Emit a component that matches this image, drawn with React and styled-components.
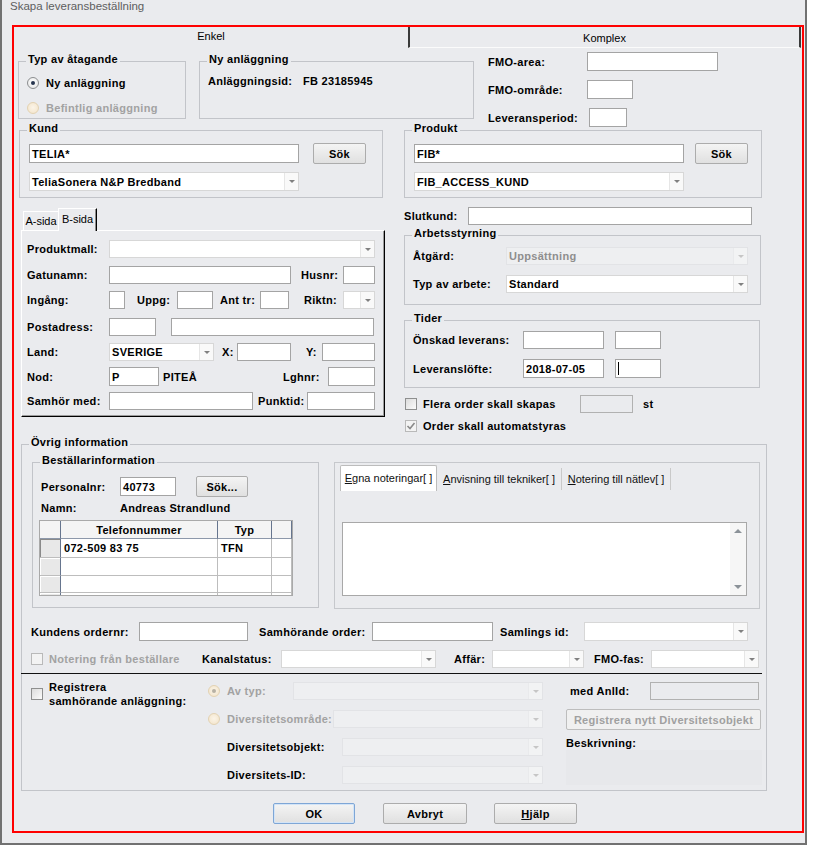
import React from "react";
import styled, { createGlobalStyle } from "styled-components";

const BG = "#eaebee";
const FONT = `"Liberation Sans", Arial, sans-serif`;

const GlobalStyle = createGlobalStyle`
  html, body { margin: 0; padding: 0; background: #ffffff; }
  body { font-family: ${FONT}; color: #000; }
`;

// Window chrome
const Window = styled.div`
  box-sizing: border-box;
  width: 807px;
  height: 845px;
  background: ${BG};
  border: 2px solid #717171;
  border-top: none;
  overflow: hidden;
`;

const TitleBar = styled.div`
  height: 25px;
  padding-left: 8px;
  font: 11.5px ${FONT};
  line-height: 14px;
  color: #5e5e5e;
  overflow: hidden;
`;

const TitleText = styled.div`
  margin-top: -1px;
`;

const RedFrame = styled.div`
  box-sizing: border-box;
  margin-left: 10px;
  width: 792px;
  height: 808px;
  border: 2px solid #ff0000;
  display: flex;
  flex-direction: column;
`;

const TopTabs = styled.div`
  display: flex;
  height: 21px;
  flex: none;
`;

const TopTab = styled.div`
  box-sizing: border-box;
  width: ${(p) => p.$w}px;
  display: flex;
  align-items: center;
  justify-content: center;
  font: 11px ${FONT};
  padding-bottom: ${(p) => (p.$active ? 3 : 0)}px;
  padding-top: ${(p) => (p.$active ? 0 : 1)}px;
  border-left: ${(p) => (p.$active ? "none" : "2px solid #3a3a3a")};
  border-right: ${(p) => (p.$active ? "none" : "2px solid #3a3a3a")};
  border-bottom: ${(p) => (p.$active ? "none" : "1px solid #fbfbfb")};
`;

const Page = styled.div`
  display: flex;
  flex-direction: column;
  padding-left: 4px;
`;

// Layout helpers
const Section = styled.div`
  display: flex;
  align-items: flex-start;
  flex: none;
  margin-top: ${(p) => p.$mt || 0}px;
  margin-left: ${(p) => p.$ml || 0}px;
`;

const Column = styled.div`
  display: flex;
  flex-direction: column;
  flex: none;
  width: ${(p) => (p.$w ? `${p.$w}px` : "auto")};
  margin-top: ${(p) => p.$mt || 0}px;
  margin-left: ${(p) => p.$ml || 0}px;
`;

const Row = styled.div`
  display: flex;
  align-items: center;
  flex: none;
  height: ${(p) => p.$h || 18}px;
  margin-top: ${(p) => p.$mt || 0}px;
  margin-left: ${(p) => p.$ml || 0}px;
`;

const Text = styled.span`
  flex: none;
  box-sizing: border-box;
  width: ${(p) => (p.$w ? `${p.$w}px` : "auto")};
  margin-left: ${(p) => p.$ml || 0}px;
  font: bold 11px ${FONT};
  letter-spacing: 0.3px;
  line-height: 14px;
  color: ${(p) => (p.$off ? "#a2a2a2" : "#000")};
  white-space: nowrap;
`;

const Group = styled.div`
  position: relative;
  flex: none;
  box-sizing: border-box;
  width: ${(p) => p.$w}px;
  height: ${(p) => p.$h}px;
  margin-top: ${(p) => p.$mt || 0}px;
  margin-left: ${(p) => p.$ml || 0}px;
  border: 1px solid #c2c4c9;
  display: flex;
  flex-direction: column;
`;

const Legend = styled.span`
  position: absolute;
  top: -9px;
  left: 7px;
  padding: 0 2px;
  background: ${BG};
  font: bold 11px ${FONT};
  letter-spacing: 0.3px;
  line-height: 13px;
  white-space: nowrap;
`;

// Controls
const Field = styled.div`
  flex: none;
  box-sizing: border-box;
  display: flex;
  align-items: center;
  width: ${(p) => p.$w}px;
  height: ${(p) => p.$h || 18}px;
  margin-left: ${(p) => p.$ml || 0}px;
  padding-left: 2px;
  border: 1px solid ${(p) => (p.$off ? "#b1b1b1" : "#a4a4a4")};
  background: ${(p) => (p.$off ? BG : "#fff")};
  font: bold 11px ${FONT};
  letter-spacing: 0.3px;
  white-space: nowrap;
  overflow: hidden;
`;

const Caret = styled.span`
  width: 1px;
  height: 13px;
  background: #000;
`;

const ComboBox = styled.div`
  flex: none;
  box-sizing: border-box;
  display: flex;
  width: ${(p) => p.$w}px;
  height: ${(p) => p.$h || 18}px;
  margin-left: ${(p) => p.$ml || 0}px;
  border: 1px solid ${(p) => (p.$off ? "#e2e3e6" : "#d7d7d7")};
  background: ${(p) => (p.$off ? "#eeeff1" : "#fff")};
`;

const ComboValue = styled.span`
  flex: 1;
  display: flex;
  align-items: center;
  padding-left: 2px;
  font: bold 11px ${FONT};
  letter-spacing: 0.3px;
  color: ${(p) => (p.$off ? "#8e8e8e" : "#000")};
  white-space: nowrap;
  overflow: hidden;
`;

const ComboArrow = styled.span`
  width: 13px;
  flex: none;
  display: flex;
  align-items: center;
  justify-content: center;
  border-left: 1px solid ${(p) => (p.$off ? "#e9eaec" : "#e6e6e6")};
  background: ${(p) => (p.$off ? "#f2f3f4" : "#f9f9f9")};
  &::after {
    content: "";
    border-left: 3px solid transparent;
    border-right: 3px solid transparent;
    border-top: 3px solid ${(p) => (p.$off ? "#c6c6c6" : "#808080")};
  }
`;

function Combo({ w, h, ml, value, off }) {
  return (
    <ComboBox $w={w} $h={h} $ml={ml} $off={off}>
      <ComboValue $off={off}>{value}</ComboValue>
      <ComboArrow $off={off} />
    </ComboBox>
  );
}

const Btn = styled.div`
  flex: none;
  box-sizing: border-box;
  display: flex;
  align-items: center;
  justify-content: center;
  width: ${(p) => p.$w}px;
  height: ${(p) => p.$h || 21}px;
  margin-left: ${(p) => p.$ml || 0}px;
  margin-top: ${(p) => p.$mt || 0}px;
  border: 1px solid ${(p) => (p.$primary ? "#7ea6d6" : p.$off ? "#bdbdbd" : "#acacac")};
  box-shadow: ${(p) => (p.$primary ? "inset 0 0 0 1px #d3e4f7" : "none")};
  border-radius: 2px;
  background: ${(p) => (p.$off ? "#f0f0f0" : "linear-gradient(#f4f4f4, #e0e0e0)")};
  font: bold 11px ${FONT};
  letter-spacing: 0.3px;
  color: ${(p) => (p.$off ? "#a0a0a0" : "#000")};
  white-space: nowrap;
`;

const U = styled.span`
  text-decoration: underline;
`;

const Radio = styled.span`
  position: relative;
  flex: none;
  box-sizing: border-box;
  width: 12px;
  height: 12px;
  border-radius: 50%;
  border: 1px solid ${(p) => (p.$off ? "#e3d2b2" : "#8c8e90")};
  background: ${(p) =>
    p.$off
      ? "radial-gradient(circle at 50% 45%, #fbf4e8, #f2e3c8)"
      : "radial-gradient(circle at 50% 40%, #ffffff, #e2e2e2)"};
  &::after {
    content: "";
    display: ${(p) => (p.$checked ? "block" : "none")};
    position: absolute;
    left: 3px;
    top: 3px;
    width: 4px;
    height: 4px;
    border-radius: 50%;
    background: ${(p) => (p.$off ? "#b8b1a4" : "#26344e")};
  }
`;

const Check = styled.span`
  flex: none;
  box-sizing: border-box;
  width: 12px;
  height: 12px;
  margin-left: ${(p) => p.$ml || 0}px;
  border: 1px solid ${(p) => (p.$off ? "#b9b9b9" : "#8e8f8f")};
  background: ${(p) => (p.$off ? "#f3f3f3" : "linear-gradient(135deg, #dcdcdc, #fbfbfb)")};
  display: flex;
  align-items: center;
  justify-content: center;
`;

function Checkbox({ ml, off, checked }) {
  return (
    <Check $ml={ml} $off={off}>
      {checked && (
        <svg width="10" height="10" viewBox="0 0 10 10">
          <polyline points="1.5,5 4,7.5 8.5,2" fill="none" stroke="#8a8a8a" strokeWidth="1.6" />
        </svg>
      )}
    </Check>
  );
}

// Small A/B tabs
const SubTabs = styled.div`
  position: relative;
  z-index: 1;
  display: flex;
  align-items: flex-end;
  height: 22px;
  margin-top: 10px;
  padding-left: 2px;
`;

const SubTab = styled.div`
  box-sizing: border-box;
  width: ${(p) => p.$w}px;
  height: ${(p) => (p.$active ? 23 : 19)}px;
  margin-bottom: ${(p) => (p.$active ? -1 : 0)}px;
  padding-bottom: ${(p) => (p.$active ? 3 : 0)}px;
  background: ${BG};
  border-top: 1px solid #fff;
  border-left: 1px solid #fff;
  border-right: ${(p) => (p.$active ? "1px solid #000" : "none")};
  box-shadow: ${(p) => (p.$active ? "inset -1px 0 0 #8a8a8a" : "none")};
  display: flex;
  align-items: center;
  justify-content: center;
  font: 11px ${FONT};
`;

const SubPage = styled.div`
  box-sizing: border-box;
  width: 364px;
  height: 187px;
  border-top: 1px solid #fff;
  border-left: 1px solid #fff;
  border-right: 1px solid #000;
  border-bottom: 1px solid #000;
  box-shadow: inset -1px -1px 0 #9c9c9c;
  display: flex;
  flex-direction: column;
  padding-left: 5px;
`;

// Phone grid
const Table = styled.div`
  box-sizing: border-box;
  width: 254px;
  height: 76px;
  margin-left: 6px;
  margin-top: 5px;
  border: 1px solid #a9a9a9;
  background: #fff;
  display: grid;
  grid-template-columns: 21px 157px 54px 20px;
  grid-template-rows: 18px 19px 18px 17px 18px;
  overflow: hidden;
`;

const Cell = styled.div`
  box-sizing: border-box;
  display: flex;
  align-items: center;
  justify-content: ${(p) => (p.$head ? "center" : "flex-start")};
  padding-left: ${(p) => (p.$head ? 0 : 3)}px;
  border-right: 1px solid ${(p) => (p.$head || p.$lead ? "#66758e" : "#bdbdbd")};
  border-bottom: 1px solid ${(p) => (p.$head ? "#8d98aa" : "#bdbdbd")};
  background: ${(p) => (p.$head ? "#f4f4f4" : p.$lead ? "#e8e8e8" : "#fff")};
  box-shadow: ${(p) => (p.$pressed ? "inset 1px 1px 0 #8a8a8a" : p.$lead ? "inset 1px 1px 0 #fff" : "none")};
  font: bold 11px ${FONT};
  letter-spacing: 0.3px;
  white-space: nowrap;
`;

// Notes tabs
const NotesPanel = styled.div`
  flex: none;
  box-sizing: border-box;
  width: 426px;
  height: 147px;
  margin-left: 15px;
  border: 1px solid #c6c8cc;
  display: flex;
  flex-direction: column;
`;

const NoteTabs = styled.div`
  display: flex;
  align-items: flex-start;
  height: 26px;
  margin-top: 2px;
  margin-left: 5px;
`;

const NoteTab = styled.div`
  box-sizing: border-box;
  width: ${(p) => p.$w}px;
  height: ${(p) => (p.$active ? 26 : 22)}px;
  margin-top: ${(p) => (p.$active ? 0 : 3)}px;
  background: ${(p) => (p.$active ? "#fff" : "transparent")};
  border: ${(p) => (p.$active ? "1px solid #bcbcbc" : "none")};
  border-bottom: none;
  border-right: 1px solid ${(p) => (p.$active ? "#bcbcbc" : "#c9c9c9")};
  border-radius: ${(p) => (p.$active ? "2px 2px 0 0" : "0")};
  display: flex;
  align-items: center;
  justify-content: center;
  padding-bottom: ${(p) => (p.$active ? 2 : 0)}px;
  font: 11px ${FONT};
  color: #111;
  white-space: nowrap;
`;

const NoteArea = styled.div`
  box-sizing: border-box;
  width: 405px;
  height: 74px;
  margin-top: 31px;
  margin-left: 7px;
  border: 1px solid #a8a8a8;
  background: #fff;
  display: flex;
  justify-content: flex-end;
`;

const ScrollBar = styled.div`
  width: 16px;
  background: #f6f6f6;
  display: flex;
  flex-direction: column;
  justify-content: space-between;
  align-items: center;
  padding: 6px 0;
`;

const ScrollArrow = styled.span`
  border-left: 4px solid transparent;
  border-right: 4px solid transparent;
  border-bottom: ${(p) => (p.$up ? "4px solid #8b9298" : "none")};
  border-top: ${(p) => (p.$up ? "none" : "4px solid #8b9298")};
`;

const Separator = styled.div`
  flex: none;
  width: 741px;
  height: 1px;
  margin-top: 5px;
  margin-left: -1px;
  background: #111;
`;

const DescBox = styled.div`
  width: 196px;
  height: 35px;
  background: #e7e8eb;
`;

const TwoLine = styled(Text)`
  white-space: normal;
  line-height: 14px;
`;

export default function App() {
  return (
    <>
      <GlobalStyle />
      <Window>
        <TitleBar>
          <TitleText>Skapa leveransbeställning</TitleText>
        </TitleBar>
        <RedFrame>
          <TopTabs>
            <TopTab $w={394} $active>Enkel</TopTab>
            <TopTab $w={393}>Komplex</TopTab>
          </TopTabs>
          <Page>
            {/* Top row */}
            <Section $mt={4}>
              <Group $w={168} $h={58} $mt={9}>
                <Legend>Typ av åtagande</Legend>
                <Row $h={14} $mt={14} $ml={8}>
                  <Radio $checked />
                  <Text $ml={7}>Ny anläggning</Text>
                </Row>
                <Row $h={14} $mt={11} $ml={8}>
                  <Radio $off />
                  <Text $ml={7} $off>Befintlig anläggning</Text>
                </Row>
              </Group>
              <Group $w={275} $h={58} $mt={9} $ml={13}>
                <Legend>Ny anläggning</Legend>
                <Row $h={14} $mt={12} $ml={8}>
                  <Text $w={95}>Anläggningsid:</Text>
                  <Text>FB 23185945</Text>
                </Row>
              </Group>
              <Column $ml={14}>
                <Row $h={19}>
                  <Text $w={99}>FMO-area:</Text>
                  <Field $w={131} $h={19} />
                </Row>
                <Row $h={19} $mt={9}>
                  <Text $w={99}>FMO-område:</Text>
                  <Field $w={46} $h={19} />
                </Row>
                <Row $h={19} $mt={9}>
                  <Text $w={101}>Leveransperiod:</Text>
                  <Field $w={38} $h={19} />
                </Row>
              </Column>
            </Section>

            {/* Kund / Produkt */}
            <Section $mt={3}>
              <Group $w={364} $h={68} $ml={1}>
                <Legend>Kund</Legend>
                <Row $h={21} $mt={12} $ml={9}>
                  <Field $w={270} $h={19}>TELIA*</Field>
                  <Btn $w={53} $ml={14}>Sök</Btn>
                </Row>
                <Row $h={19} $mt={8} $ml={9}>
                  <Combo w={270} h={19} value="TeliaSonera N&P Bredband" />
                </Row>
              </Group>
              <Group $w={358} $h={68} $ml={21}>
                <Legend>Produkt</Legend>
                <Row $h={21} $mt={12} $ml={9}>
                  <Field $w={270} $h={19}>FIB*</Field>
                  <Btn $w={53} $ml={11}>Sök</Btn>
                </Row>
                <Row $h={19} $mt={8} $ml={9}>
                  <Combo w={270} h={19} value="FIB_ACCESS_KUND" />
                </Row>
              </Group>
            </Section>

            {/* Address tabs + right column */}
            <Section>
              <Column $w={364} $ml={3}>
                <SubTabs>
                  <SubTab $w={35}>A-sida</SubTab>
                  <SubTab $w={39} $active>B-sida</SubTab>
                </SubTabs>
                <SubPage>
                  <Row $mt={9}>
                    <Text $w={82}>Produktmall:</Text>
                    <Combo w={266} />
                  </Row>
                  <Row $mt={8}>
                    <Text $w={82}>Gatunamn:</Text>
                    <Field $w={182} />
                    <Text $w={42} $ml={10}>Husnr:</Text>
                    <Field $w={32} />
                  </Row>
                  <Row $mt={7}>
                    <Text $w={82}>Ingång:</Text>
                    <Field $w={16} />
                    <Text $w={40} $ml={12}>Uppg:</Text>
                    <Field $w={36} />
                    <Text $w={40} $ml={7}>Ant tr:</Text>
                    <Field $w={29} />
                    <Text $w={39} $ml={15}>Riktn:</Text>
                    <Combo w={32} />
                  </Row>
                  <Row $mt={9}>
                    <Text $w={82}>Postadress:</Text>
                    <Field $w={47} />
                    <Field $w={203} $ml={15} />
                  </Row>
                  <Row $mt={7}>
                    <Text $w={82}>Land:</Text>
                    <Combo w={105} value="SVERIGE" />
                    <Text $w={15} $ml={8}>X:</Text>
                    <Field $w={54} />
                    <Text $w={16} $ml={15}>Y:</Text>
                    <Field $w={53} />
                  </Row>
                  <Row $mt={6} $h={19}>
                    <Text $w={82}>Nod:</Text>
                    <Field $w={50} $h={19}>P</Field>
                    <Text $w={120} $ml={4}>PITEÅ</Text>
                    <Text $w={45}>Lghnr:</Text>
                    <Field $w={47} $h={19} />
                  </Row>
                  <Row $mt={6}>
                    <Text $w={82}>Samhör med:</Text>
                    <Field $w={144} />
                    <Text $w={49} $ml={5}>Punktid:</Text>
                    <Field $w={68} />
                  </Row>
                </SubPage>
              </Column>

              <Column $w={358} $ml={19}>
                <Row $mt={9}>
                  <Text $w={64}>Slutkund:</Text>
                  <Field $w={284} />
                </Row>
                <Group $w={357} $h={70} $mt={10}>
                  <Legend>Arbetsstyrning</Legend>
                  <Row $mt={11} $ml={8}>
                    <Text $w={93}>Åtgärd:</Text>
                    <Combo w={242} value="Uppsättning" off />
                  </Row>
                  <Row $mt={10} $ml={8}>
                    <Text $w={93}>Typ av arbete:</Text>
                    <Combo w={242} value="Standard" />
                  </Row>
                </Group>
                <Group $w={356} $h={68} $mt={15}>
                  <Legend>Tider</Legend>
                  <Row $mt={10} $ml={8}>
                    <Text $w={110}>Önskad leverans:</Text>
                    <Field $w={81} />
                    <Field $w={46} $ml={11} />
                  </Row>
                  <Row $mt={10} $ml={8} $h={19}>
                    <Text $w={110}>Leveranslöfte:</Text>
                    <Field $w={81} $h={19}>2018-07-05</Field>
                    <Field $w={46} $h={19} $ml={11}>
                      <Caret />
                    </Field>
                  </Row>
                </Group>
                <Row $mt={7}>
                  <Checkbox ml={1} />
                  <Text $w={157} $ml={6}>Flera order skall skapas</Text>
                  <Field $w={53} $off />
                  <Text $ml={10}>st</Text>
                </Row>
                <Row $mt={6} $h={14}>
                  <Checkbox ml={1} off checked />
                  <Text $ml={6}>Order skall automatstyras</Text>
                </Row>
              </Column>
            </Section>

            {/* Övrig information */}
            <Group $w={746} $h={347} $mt={11} $ml={3}>
              <Legend>Övrig information</Legend>
              <Section $mt={17}>
                <Group $w={287} $h={146} $ml={10}>
                  <Legend>Beställarinformation</Legend>
                  <Row $h={21} $mt={13} $ml={8}>
                    <Text $w={79}>Personalnr:</Text>
                    <Field $w={56} $h={19}>40773</Field>
                    <Btn $w={52} $ml={20}>Sök...</Btn>
                  </Row>
                  <Row $h={14} $mt={4} $ml={8}>
                    <Text $w={79}>Namn:</Text>
                    <Text>Andreas Strandlund</Text>
                  </Row>
                  <Table>
                    <Cell $head />
                    <Cell $head>Telefonnummer</Cell>
                    <Cell $head>Typ</Cell>
                    <Cell $head />
                    <Cell $lead $pressed />
                    <Cell>072-509 83 75</Cell>
                    <Cell>TFN</Cell>
                    <Cell />
                    <Cell $lead />
                    <Cell />
                    <Cell />
                    <Cell />
                    <Cell $lead />
                    <Cell />
                    <Cell />
                    <Cell />
                    <Cell $lead />
                    <Cell />
                    <Cell />
                    <Cell />
                  </Table>
                </Group>
                <NotesPanel>
                  <NoteTabs>
                    <NoteTab $w={97} $active>
                      <U>E</U>gna noteringar[ ]
                    </NoteTab>
                    <NoteTab $w={125}>
                      <U>A</U>nvisning till tekniker[ ]
                    </NoteTab>
                    <NoteTab $w={109}>
                      <U>N</U>otering till nätlev[ ]
                    </NoteTab>
                  </NoteTabs>
                  <NoteArea>
                    <ScrollBar>
                      <ScrollArrow $up />
                      <ScrollArrow />
                    </ScrollBar>
                  </NoteArea>
                </NotesPanel>
              </Section>

              <Row $h={19} $mt={13} $ml={9}>
                <Text $w={108}>Kundens ordernr:</Text>
                <Field $w={109} $h={19} />
                <Text $w={113} $ml={11}>Samhörande order:</Text>
                <Field $w={121} $h={19} />
                <Text $w={84} $ml={7}>Samlings id:</Text>
                <Combo w={164} h={19} />
              </Row>
              <Row $mt={9} $ml={9}>
                <Checkbox off />
                <Text $w={153} $ml={6} $off>Notering från beställare</Text>
                <Text $w={79}>Kanalstatus:</Text>
                <Combo w={155} />
                <Text $w={38} $ml={18}>Affär:</Text>
                <Combo w={92} />
                <Text $w={57} $ml={10}>FMO-fas:</Text>
                <Combo w={108} />
              </Row>
              <Separator />

              <Section $mt={8}>
                <Row $h={28} $mt={-2} $ml={9}>
                  <Checkbox />
                  <TwoLine $w={159} $ml={6}>
                    Registrera
                    <br />
                    samhörande anläggning:
                  </TwoLine>
                </Row>
                <Column $w={335}>
                  <Row>
                    <Radio $off $checked />
                    <Text $w={66} $ml={7} $off>Av typ:</Text>
                    <Combo w={250} off />
                  </Row>
                  <Row $mt={10}>
                    <Radio $off />
                    <Text $w={106} $ml={7} $off>Diversitetsområde:</Text>
                    <Combo w={210} off />
                  </Row>
                  <Row $mt={10} $ml={19}>
                    <Text $w={115}>Diversitetsobjekt:</Text>
                    <Combo w={201} off />
                  </Row>
                  <Row $mt={10} $ml={19}>
                    <Text $w={115}>Diversitets-ID:</Text>
                    <Combo w={201} off />
                  </Row>
                </Column>
                <Column $w={196} $ml={23}>
                  <Row>
                    <Text $w={80} $ml={4}>med AnlId:</Text>
                    <Field $w={109} $off />
                  </Row>
                  <Btn $w={195} $mt={9} $off>Registrera nytt Diversitetsobjekt</Btn>
                  <Row $h={14} $mt={6}>
                    <Text>Beskrivning:</Text>
                  </Row>
                  <DescBox />
                </Column>
              </Section>
            </Group>

            {/* Dialog buttons */}
            <Section $mt={12} $ml={255}>
              <Btn $w={82} $primary>OK</Btn>
              <Btn $w={84} $ml={28}>Avbryt</Btn>
              <Btn $w={83} $ml={27}>
                <U>H</U>jälp
              </Btn>
            </Section>
          </Page>
        </RedFrame>
      </Window>
    </>
  );
}
